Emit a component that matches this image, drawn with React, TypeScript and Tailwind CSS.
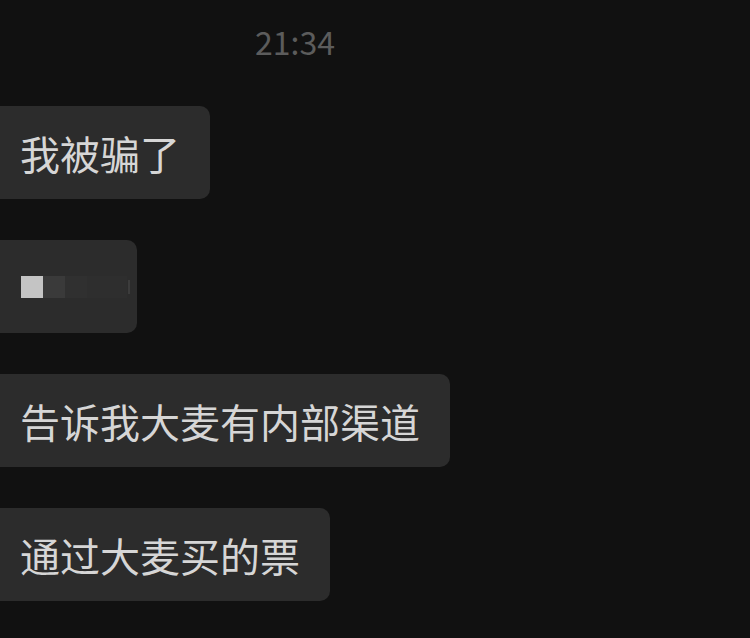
const messages = ["我被骗了", null, "告诉我大麦有内部渠道", "通过大麦买的票"];

function Bubble({ text }: { text: string | null }) {
  if (text === null) {
    return (
      <div className="flex h-[93px] w-[149px] items-center rounded-[10px] bg-[#2c2c2c] pl-[33px]">
        <div className="h-[22px] w-[22px] bg-[#c4c4c4]" />
        <div className="h-[22px] w-[22px] bg-[#3a3a3a]" />
        <div className="h-[22px] w-[22px] bg-[#303030]" />
        <div className="h-[22px] w-[40px] bg-[#2e2e2e]" />
        <div className="ml-[1px] h-[14px] w-[2px] bg-[#3c3c3c]" />
      </div>
    );
  }
  return (
    <div className="flex h-[93px] items-center rounded-[10px] bg-[#2c2c2c] pl-[32px] pr-[30px]">
      <span className="text-[40px] leading-[56px] text-[#d6d6d6]">{text}</span>
    </div>
  );
}

export default function App() {
  return (
    <div
      className="h-[638px] w-[750px] overflow-hidden bg-[#111111]"
      style={{ fontFamily: '"Noto Sans CJK SC", "Noto Sans", sans-serif' }}
    >
      <div className="flex pl-[255px] pt-[21px]">
        <span className="text-[32px] leading-[40px] text-[#5c5c5c]">21:34</span>
      </div>
      <div className="ml-[-12px] mt-[45px] flex flex-col items-start gap-[41px]">
        {messages.map((m, i) => (
          <Bubble key={i} text={m} />
        ))}
      </div>
    </div>
  );
}
